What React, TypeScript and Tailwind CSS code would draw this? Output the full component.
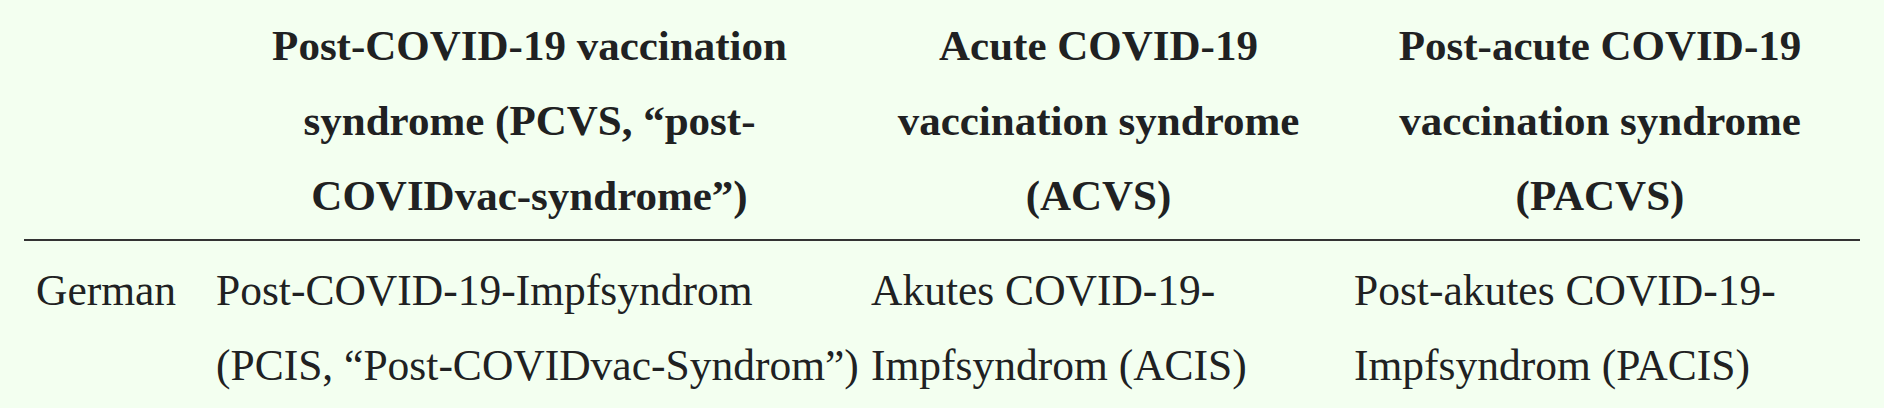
const headers = [
  ["Post-COVID-19 vaccination", "syndrome (PCVS, “post-", "COVIDvac-syndrome”)"],
  ["Acute COVID-19", "vaccination syndrome", "(ACVS)"],
  ["Post-acute COVID-19", "vaccination syndrome", "(PACVS)"],
];

const german = [
  ["Post-COVID-19-Impfsyndrom", "(PCIS, “Post-COVIDvac-Syndrom”)"],
  ["Akutes COVID-19-", "Impfsyndrom (ACIS)"],
  ["Post-akutes COVID-19-", "Impfsyndrom (PACIS)"],
];

const Lines = ({ lines }: { lines: string[] }) => (
  <>
    {lines.map((l, i) => (
      <span key={i} className="block whitespace-nowrap">
        {l}
      </span>
    ))}
  </>
);

export default function App() {
  return (
    <div className="w-[1884px] h-[408px] overflow-hidden bg-[#f3fff0] text-[#202122] font-['Liberation_Serif',serif] text-[44px] leading-[75px]">
      <div className="ml-[24px] w-[1836px] pt-[8px]">
        <div className="grid grid-cols-[178px_655px_483px_520px] border-b-2 border-[#333333] pb-[6px] font-bold text-center text-[43px]">
          <div />
          {headers.map((h, i) => (
            <div key={i} className="px-[14px]">
              <Lines lines={h} />
            </div>
          ))}
        </div>
        <div className="grid grid-cols-[178px_655px_483px_520px] pt-[12px] text-[43.5px]">
          <div className="px-[12px]">German</div>
          {german.map((g, i) => (
            <div key={i} className="px-[14px]">
              <Lines lines={g} />
            </div>
          ))}
        </div>
      </div>
    </div>
  );
}
